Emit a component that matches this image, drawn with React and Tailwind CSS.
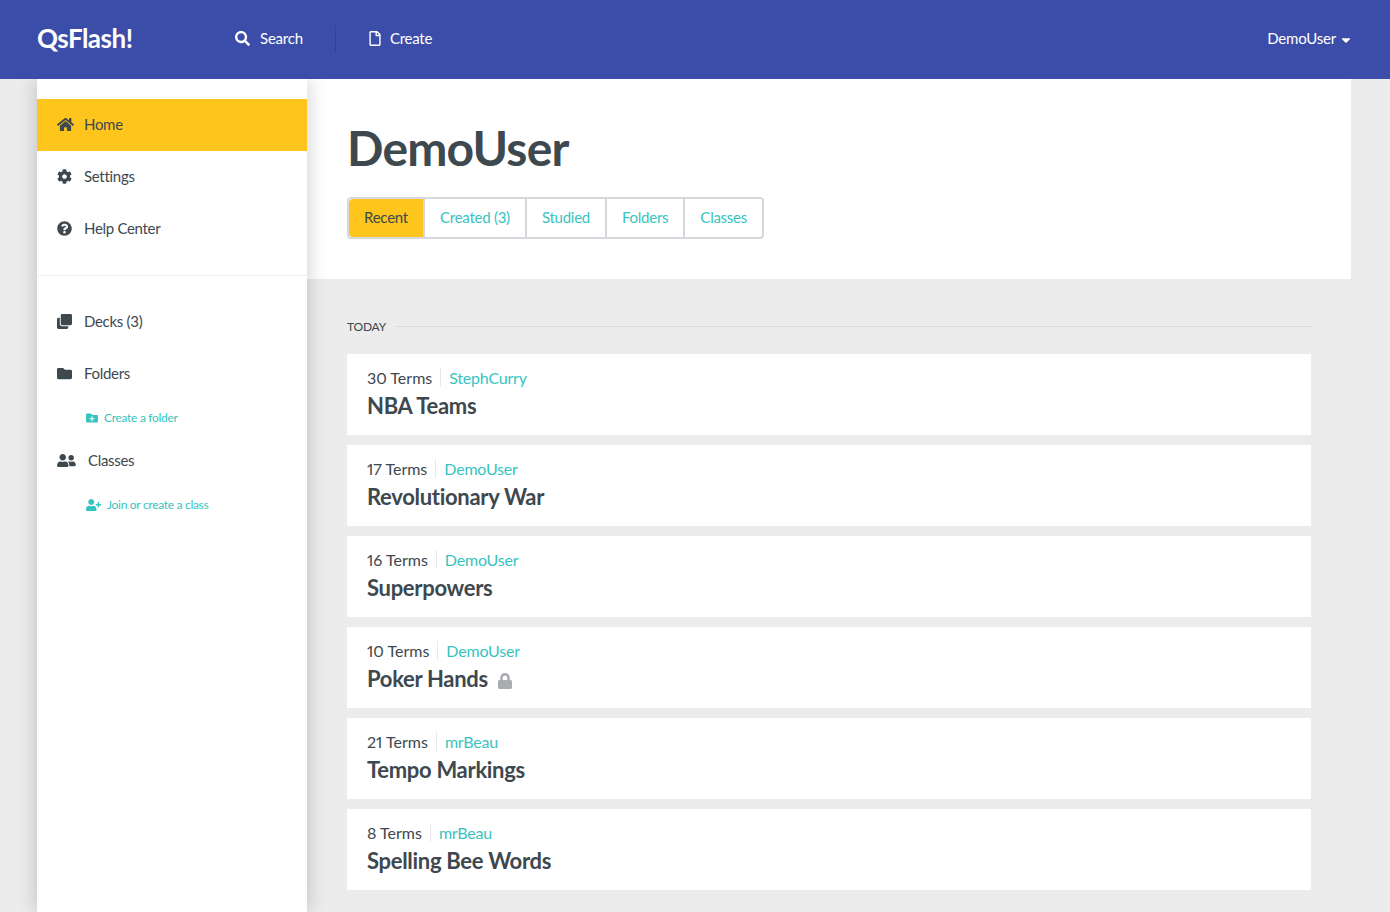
import React from 'react'
import {
  FaHome, FaCog, FaQuestionCircle, FaClone, FaFolder, FaFolderPlus,
  FaUserFriends, FaUserPlus, FaLock, FaSearch, FaRegFile, FaCaretDown,
} from 'react-icons/fa'

const decks = [
  { terms: '30 Terms', author: 'StephCurry', title: 'NBA Teams' },
  { terms: '17 Terms', author: 'DemoUser', title: 'Revolutionary War' },
  { terms: '16 Terms', author: 'DemoUser', title: 'Superpowers' },
  { terms: '10 Terms', author: 'DemoUser', title: 'Poker Hands', locked: true },
  { terms: '21 Terms', author: 'mrBeau', title: 'Tempo Markings' },
  { terms: '8 Terms', author: 'mrBeau', title: 'Spelling Bee Words' },
]

const tabs = ['Created (3)', 'Studied', 'Folders', 'Classes']

const NavItem = ({ icon: Icon, label, active, textClass = 'ml-3', iconClass = 'w-[15px] h-[15px]' }) => (
  <div className={`flex items-center h-[52px] pl-5 pb-[2px] text-[15px] tracking-[-0.3px] text-[#3d484f] ${active ? 'bg-[#fec51c]' : ''}`}>
    <Icon className={iconClass} />
    <span className={textClass}>{label}</span>
  </div>
)

const SubItem = ({ icon: Icon, label, iconClass }) => (
  <div className="flex items-center h-[35px] gap-[6px] pl-[49px] text-xs tracking-[-0.3px] text-[#37c4c0]">
    <Icon className={iconClass} />
    <span>{label}</span>
  </div>
)

const DeckRow = ({ deck }) => (
  <div className="h-[81px] bg-white pl-5 pt-[13px]">
    <div className="flex items-center h-[21px] text-base">
      <span className="text-[#3d484f] proportional-nums">{deck.terms}</span>
      <span className="mx-2 h-[19px] w-px bg-[#e6e8ea]" />
      <span className="tracking-[-0.2px] text-[#37c4c0]">{deck.author}</span>
    </div>
    <div className="mt-1 flex items-center text-[22px] leading-7 font-bold tracking-[-0.3px] text-[#3d484f]">
      {deck.title}
      {deck.locked && <FaLock className="ml-[10px] mt-[3px] w-[14px] h-[16px] text-[#a9adb1]" />}
    </div>
  </div>
)

const App = () => {
  return (
    <div className="h-[912px] overflow-hidden flex flex-col bg-[#ececec] font-['Lato','Liberation_Sans',sans-serif]">
      <header className="relative z-20 flex items-center h-[79px] shrink-0 pl-[37px] pr-[39px] pb-[2px] bg-[#3b4da8] text-white">
        <div className="w-[198px] text-[26px] font-bold tracking-[-0.5px]">QsFlash!</div>
        <div className="flex items-center text-[15px] tracking-[-0.2px]">
          <FaSearch className="w-[15px] h-[15px]" />
          <span className="ml-[10px]">Search</span>
        </div>
        <span className="mx-8 h-[26px] w-px bg-[#33448f]" />
        <div className="flex items-center text-[15px] tracking-[-0.25px]">
          <FaRegFile className="w-[14px] h-[15px]" />
          <span className="ml-2">Create</span>
        </div>
        <div className="ml-auto flex items-center text-[15px] tracking-[-0.2px]">
          <span>DemoUser</span>
          <FaCaretDown className="ml-[5px] mt-[3px] w-[10px] h-[14px]" />
        </div>
      </header>

      <div className="flex flex-1 min-h-0 pl-[37px] pr-[39px]">
        <aside className="relative z-10 w-[270px] shrink-0 bg-white pt-5 shadow-[0_0_20px_rgba(0,0,0,0.2)]">
          <NavItem icon={FaHome} label="Home" active iconClass="w-[17px] h-[15px]" textClass="ml-[10px]" />
          <NavItem icon={FaCog} label="Settings" />
          <NavItem icon={FaQuestionCircle} label="Help Center" />
          <div className="mt-5 mb-[20px] border-t border-[#eeeeee]" />
          <NavItem icon={FaClone} label="Decks (3)" />
          <NavItem icon={FaFolder} label="Folders" />
          <SubItem icon={FaFolderPlus} label="Create a folder" iconClass="w-3 h-3" />
          <NavItem icon={FaUserFriends} label="Classes" iconClass="w-[19px] h-[15px]" />
          <SubItem icon={FaUserPlus} label="Join or create a class" iconClass="w-[15px] h-3" />
        </aside>

        <main className="flex-1 min-w-0">
          <section className="h-[200px] bg-white pl-10 pt-[37px]">
            <h1 className="text-[48px] leading-[64px] font-bold tracking-[-0.8px] text-[#3d484f]">DemoUser</h1>
            <div className="mt-[17px] inline-flex h-[42px] rounded border-2 border-[#d5d9dd] text-[15px] tracking-[-0.25px] text-[#37c4c0]">
              <div className="flex items-center justify-center w-[74px] pb-[2px] rounded-l-sm bg-[#fec51c] text-[#3d484f]">Recent</div>
              {tabs.map(tab => (
                <div key={tab} className="flex items-center px-[15px] pb-[2px] whitespace-nowrap border-l-2 border-[#d5d9dd]">{tab}</div>
              ))}
            </div>
          </section>

          <section className="pl-10 pr-10 pt-[38px]">
            <div className="flex items-center h-[18px] text-xs tracking-[-0.2px] text-[#3d484f]">
              <span className="pt-[1px]">TODAY</span>
              <span className="ml-[9px] flex-1 h-px bg-[#d8dadc]" />
            </div>
            <div className="mt-[19px] flex flex-col gap-[10px]">
              {decks.map(deck => <DeckRow key={deck.title} deck={deck} />)}
            </div>
          </section>
        </main>
      </div>
    </div>
  )
}

export default App
